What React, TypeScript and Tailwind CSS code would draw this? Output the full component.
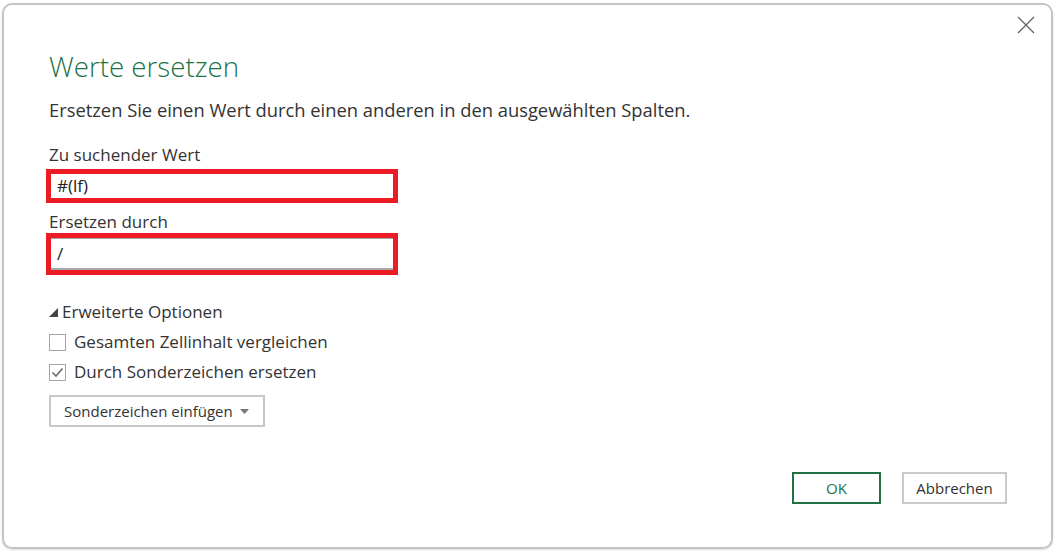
import { FC } from 'react';

const font = "font-['Open_Sans',sans-serif]";

const CloseIcon: FC = () => (
  <svg width="18" height="18" viewBox="0 0 18 18" fill="none">
    <path d="M1 1L17 17M17 1L1 17" stroke="#5f5f5f" strokeWidth="1.2" />
  </svg>
);

const Check: FC<{ checked?: boolean; label: string }> = ({ checked, label }) => (
  <label className="flex h-[22px] items-center gap-[8px] text-[17px] text-[#333]">
    <span className="flex h-[17px] w-[17px] items-center justify-center border border-[#a6a6a6] bg-white">
      {checked && (
        <svg width="13" height="11" viewBox="0 0 13 11" fill="none">
          <path d="M1.5 5.5L5 9L11.5 1.5" stroke="#6b6b6b" strokeWidth="1.6" />
        </svg>
      )}
    </span>
    {label}
  </label>
);

const App: FC = () => {
  return (
    <div className={`h-[551px] w-[1057px] bg-white p-[3px_4px_2px_2px] ${font}`}>
      <div className="relative flex h-full flex-col rounded-[10px] border-2 border-[#c4c4c4] pl-[45px] pr-[44px] pt-[43px] pb-[43px] shadow-[0_1px_2px_rgba(0,0,0,0.15)]">
        <button className="absolute right-[16px] top-[11px] p-0">
          <CloseIcon />
        </button>

        <h1 className="h-[36px] text-[27.7px] font-light leading-[36px] text-[#217346]">
          Werte ersetzen
        </h1>
        <p className="mt-[14px] h-[24px] text-[18.35px] leading-[24px] text-[#333]">
          Ersetzen Sie einen Wert durch einen anderen in den ausgewählten Spalten.
        </p>

        <div className="mt-[22px] h-[22px] text-[17px] leading-[22px] text-[#333]">Zu suchender Wert</div>
        <div className="ml-[-3px] mt-[3px] flex h-[34px] w-[352px] items-center border-[5px] border-[#ed1c24] bg-white pl-[6px] text-[17px] text-[#222]">
          #(lf)
        </div>

        <div className="mt-[8px] h-[22px] text-[17px] leading-[22px] text-[#333]">Ersetzen durch</div>
        <div className="ml-[-3px] w-[352px] border-[5px] border-[#ed1c24] bg-white">
          <div className="flex h-[32px] items-center border-t border-b-2 border-[#a8a8a8] pl-[6px] text-[17px] text-[#222]">
            /
          </div>
        </div>

        <div className="mt-[26px] flex h-[22px] items-center gap-[4px] text-[17px] text-[#333]">
          <svg width="9" height="9" viewBox="0 0 9 9">
            <path d="M9 0L9 9L0 9Z" fill="#444" />
          </svg>
          Erweiterte Optionen
        </div>
        <div className="mt-[8px]">
          <Check label="Gesamten Zellinhalt vergleichen" />
        </div>
        <div className="mt-[8px]">
          <Check checked label="Durch Sonderzeichen ersetzen" />
        </div>

        <button className="mt-[12px] flex h-[32px] w-[216px] items-center justify-between border-2 border-[#c8c8c8] bg-white pl-[13px] pr-[14px] text-[15px] text-[#333]">
          Sonderzeichen einfügen
          <svg width="9" height="5" viewBox="0 0 9 5">
            <path d="M0 0H9L4.5 5Z" fill="#777" />
          </svg>
        </button>

        <div className="mt-auto flex justify-end gap-[21px]">
          <button className="h-[32px] w-[89px] border-2 border-[#217346] bg-white text-[15px] text-[#217346]">
            OK
          </button>
          <button className="h-[32px] w-[105px] border-2 border-[#cacaca] bg-white text-[15px] text-[#333]">
            Abbrechen
          </button>
        </div>
      </div>
    </div>
  );
};

export default App;
